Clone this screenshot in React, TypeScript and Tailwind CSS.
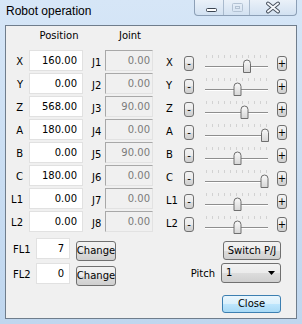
const rows = [
  { p: "X", v: "160.00", j: "J1", jv: "0.00", t: 53 },
  { p: "Y", v: "0.00", j: "J2", jv: "0.00", t: 43.5 },
  { p: "Z", v: "568.00", j: "J3", jv: "90.00", t: 50.5 },
  { p: "A", v: "180.00", j: "J4", jv: "0.00", t: 71 },
  { p: "B", v: "0.00", j: "J5", jv: "90.00", t: 43.5 },
  { p: "C", v: "180.00", j: "J6", jv: "0.00", t: 70.5 },
  { p: "L1", v: "0.00", j: "J7", jv: "0.00", t: 43.5 },
  { p: "L2", v: "0.00", j: "J8", jv: "0.00", t: 43.5 },
];

const ticks = [12, 18, 24, 30, 36, 42, 48, 54, 60, 66, 72];

function WinButton({ children, className = "" }: { children: React.ReactNode; className?: string }) {
  return (
    <div
      className={`flex items-center justify-center rounded-[3px] border border-[#707070] bg-[linear-gradient(#f2f2f2,#ebebeb_50%,#dddddd_50%,#cfcfcf)] leading-none ${className}`}
    >
      {children}
    </div>
  );
}

function Slider({ pos }: { pos: number }) {
  return (
    <svg width="83" height="24" className="block shrink-0 overflow-visible">
      {ticks.map((x) => (
        <line key={x} x1={x + 0.5} x2={x + 0.5} y1="5" y2="8" stroke="#d2d2d2" />
      ))}
      <line x1="11" x2="74" y1="16.5" y2="16.5" stroke="#8e8e8e" />
      <line x1="11" x2="74" y1="17.5" y2="17.5" stroke="#ffffff" />
      <defs>
        <linearGradient id="thumb" x1="0" x2="0" y1="0" y2="1">
          <stop offset="0" stopColor="#fafafa" />
          <stop offset="1" stopColor="#d6d6d6" />
        </linearGradient>
      </defs>
      <path
        d={`M${pos - 3.5} 22.5 V13.5 A3.5 3.5 0 0 1 ${pos + 3.5} 13.5 V22.5 Z`}
        fill="url(#thumb)"
        stroke="#6e6e6e"
      />
    </svg>
  );
}

export default function App() {
  return (
    <div className="flex h-[324px] w-[302px] flex-col bg-[linear-gradient(#d6e6f7,#bfd6ee)] font-['DejaVu_Sans',sans-serif] text-[10px] leading-[12px] text-black">
      {/* title bar */}
      <div className="flex h-[25px] shrink-0 items-start justify-between">
        <div className="pl-[6px] pt-[4px] font-['Liberation_Sans',sans-serif] text-[12px] leading-[14px]">
          Robot operation
        </div>
        <div className="mr-[5px] flex h-[16px] overflow-hidden rounded-b-[4px] border border-t-0 border-[#8c9fb6] bg-[linear-gradient(#eaf1f9,#d2e1f1)]">
          <div className="h-full w-[29px] border-r border-[#a9bacd]">
            <svg width="29" height="16">
              <rect x="11.5" y="8.5" width="10" height="3" rx="1" fill="#fff" stroke="#3b4552" />
            </svg>
          </div>
          <div className="h-full w-[26px] border-r border-[#a9bacd]">
            <svg width="26" height="16">
              <rect x="8.5" y="3.5" width="10" height="8" rx="1" fill="none" stroke="#b3c2d3" />
              <rect x="11.5" y="6.5" width="4" height="2" fill="none" stroke="#b3c2d3" />
            </svg>
          </div>
          <div className="h-full w-[46px]">
            <svg width="46" height="16">
              <path d="M18 3.5 L28 11.5 M28 3.5 L18 11.5" stroke="#4a5360" strokeWidth="4" strokeLinecap="round" />
              <path d="M18 3.5 L28 11.5 M28 3.5 L18 11.5" stroke="#f4f7fb" strokeWidth="2" strokeLinecap="round" />
            </svg>
          </div>
        </div>
      </div>

      {/* client area */}
      <div className="mx-[5px] mb-[5px] flex flex-1 flex-col border border-[#6f7d8c] bg-[#f0f0f0]">
        <div className="flex h-[24px] pt-[4px]">
          <div className="w-[23px]" />
          <div className="w-[54px] pl-[6px] text-center">Position</div>
          <div className="w-[22px]" />
          <div className="w-[48px] pl-[2px] text-center">Joint</div>
        </div>

        <div className="flex flex-col gap-[2px]">
          {rows.map((r) => (
            <div key={r.p} className="flex h-[21px] items-start">
              <div className="flex h-full w-[17px] items-center justify-end pt-[2px]">{r.p}</div>
              <div className="ml-[6px] flex h-full w-[54px] items-center justify-end border border-[#e1e1e1] bg-white pr-[5px]">
                {r.v}
              </div>
              <div className="flex h-full w-[22px] items-center pl-[9px] pt-[5px]">{r.j}</div>
              <div className="flex h-full w-[48px] items-center justify-end border border-[#a8a8a8] border-b-[#e2e2e2] border-r-[#e2e2e2] pr-[2px] text-[#7b7b7b]">
                {r.jv}
              </div>
              <div className="flex h-full w-[31px] items-center pl-[13px] pt-[5px]">{r.p}</div>
              <WinButton className="mt-[6px] h-[15px] w-[10px]">-</WinButton>
              <Slider pos={r.t} />
              <WinButton className="mt-[6px] h-[15px] w-[10px]">+</WinButton>
            </div>
          ))}
        </div>

        <div className="mt-[6px] flex">
          <div className="flex flex-col gap-[4px]">
            {[
              ["FL1", "7"],
              ["FL2", "0"],
            ].map(([l, v]) => (
              <div key={l} className="flex h-[21px] items-start">
                <div className="flex h-full w-[24px] items-center pl-[7px] pt-[3px]">{l}</div>
                <div className="ml-[6px] flex h-full w-[34px] items-center justify-end border border-[#e1e1e1] bg-white pr-[5px]">
                  {v}
                </div>
                <WinButton className="ml-[6px] mt-[3px] h-[20px] w-[40px]">Change</WinButton>
              </div>
            ))}
          </div>

          <div className="ml-auto mr-[15px] flex flex-col items-end">
            <WinButton className="mt-[3px] h-[19px] w-[58px]">Switch P/J</WinButton>
            <div className="mt-[3px] flex items-center gap-[6px]">
              <span className="pt-[2px]">Pitch</span>
              <div className="flex h-[20px] w-[60px] items-center justify-between rounded-[3px] border border-[#707070] bg-[linear-gradient(#f2f2f2,#ebebeb_50%,#dddddd_50%,#cfcfcf)] pl-[4px] pr-[5px]">
                <span>1</span>
                <svg width="7" height="4">
                  <path d="M0 0 H7 L3.5 4 Z" fill="#000" />
                </svg>
              </div>
            </div>
            <div className="mt-[12px] flex h-[18px] w-[59px] items-center justify-center rounded-[3px] border border-[#3c7fb1] bg-[linear-gradient(#eaf6fd,#d9f0fc_50%,#bee6fd_50%,#a7d9f5)] leading-none">
              Close
            </div>
          </div>
        </div>
      </div>
    </div>
  );
}
